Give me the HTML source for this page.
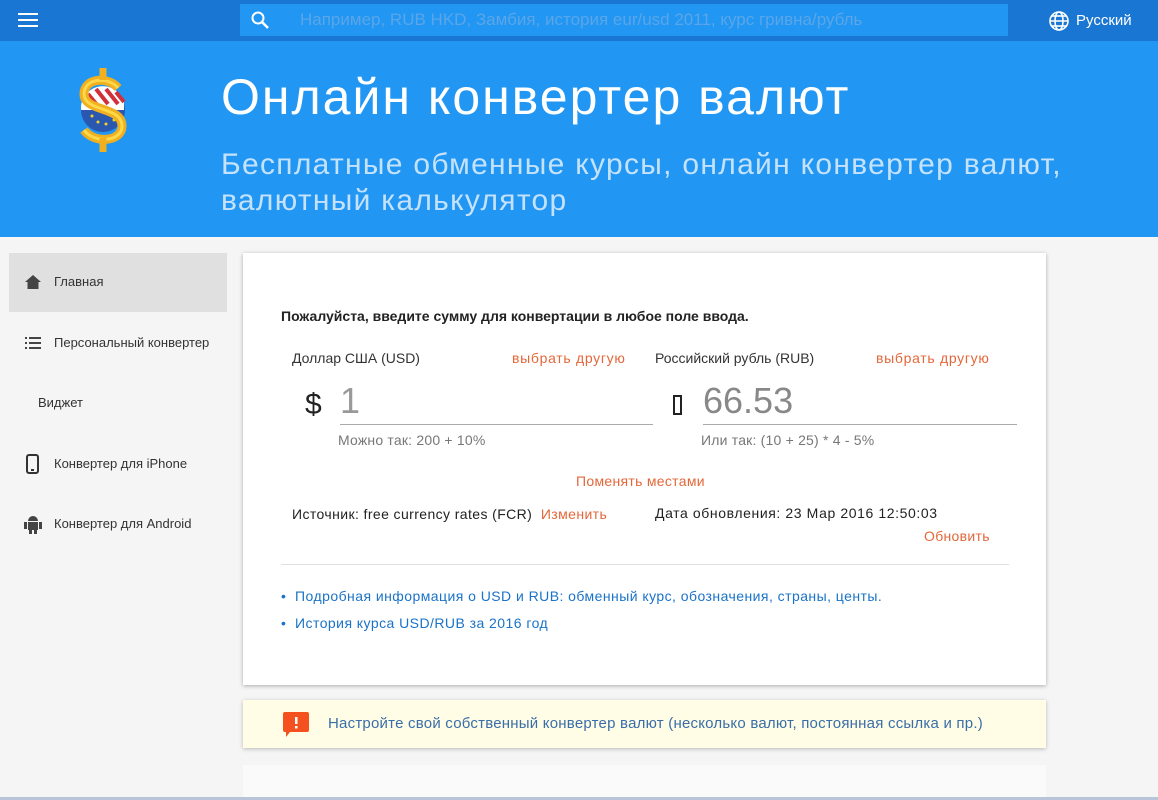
<!DOCTYPE html>
<html><head><meta charset="utf-8"><style>
*{margin:0;padding:0;box-sizing:border-box}
body{width:1158px;height:800px;overflow:hidden;background:#f5f5f5;font-family:"Liberation Sans",sans-serif;position:relative;color:#212121}
.abs{position:absolute;white-space:nowrap}
.top{left:0;top:0;width:1158px;height:41px;background:#1976d2}
.hdr{left:0;top:41px;width:1158px;height:196px;background:#2196f3}
.search{left:240px;top:4px;width:768px;height:32px;background:#2196f3}
.ph{left:300px;top:10px;color:#5aa6e8;font-size:17px}
h1{position:absolute;left:221px;top:68px;font-weight:normal;color:#fff;font-size:50px;letter-spacing:2px;white-space:nowrap}
.sub{left:221px;top:147px;color:#c4e2fb;font-size:30px;line-height:36px;width:900px;letter-spacing:1.3px;white-space:normal}
.side{font-size:13px;color:#333}
.card{background:#fff;box-shadow:0 1px 4px rgba(0,0,0,.3)}
.or{color:#e4673a}
.blue{color:#1a73c8}
</style></head><body>
<div class="abs top"></div>
<div class="abs hdr"></div>
<svg class="abs" style="left:18px;top:13px" width="20" height="14"><rect y="0" width="20" height="2" fill="#fff"/><rect y="6" width="20" height="2" fill="#fff"/><rect y="12" width="20" height="2" fill="#fff"/></svg>
<div class="abs search"></div>
<svg class="abs" style="left:250px;top:10px" width="20" height="20"><circle cx="8" cy="8" r="5.5" stroke="#fff" stroke-width="2" fill="none"/><line x1="12" y1="12" x2="18" y2="18" stroke="#fff" stroke-width="2.5"/></svg>
<div class="abs ph">Например, RUB HKD, Замбия, история eur/usd 2011, курс гривна/рубль</div>
<svg class="abs" style="left:1048px;top:10px" width="22" height="22" viewBox="0 0 22 22"><g stroke="#fff" stroke-width="1.6" fill="none"><circle cx="11" cy="11" r="9"/><ellipse cx="11" cy="11" rx="4" ry="9"/><line x1="2" y1="11" x2="20" y2="11"/><line x1="4" y1="6" x2="18" y2="6"/><line x1="4" y1="16" x2="18" y2="16"/></g></svg>
<div class="abs" style="left:1076px;top:12px;color:#fff;font-size:15px">Русский</div>
<svg class="abs" style="left:66px;top:64px" width="74" height="90" viewBox="0 0 74 90">
<circle cx="37" cy="46" r="22" fill="#2a58b0"/>
<path d="M15 42 A22 22 0 0 1 58 38 L58 46 L15 46Z" fill="#fff"/>
<g stroke="#d0303a" stroke-width="4"><line x1="22" y1="30" x2="32" y2="42"/><line x1="30" y1="25" x2="42" y2="40"/><line x1="40" y1="25" x2="52" y2="40"/><line x1="50" y1="28" x2="58" y2="38"/></g>
<g fill="#f5d020"><circle cx="26" cy="52" r="1.5"/><circle cx="32" cy="58" r="1.5"/><circle cx="40" cy="60" r="1.5"/><circle cx="48" cy="56" r="1.5"/></g>
<path d="M52 24 C42 12 18 14 18 30 C18 48 56 42 56 62 C56 78 28 80 18 66" stroke="#f0b020" stroke-width="9" fill="none"/>
<path d="M52 24 C42 12 18 14 18 30 C18 48 56 42 56 62 C56 78 28 80 18 66" stroke="#ffd84a" stroke-width="3" fill="none"/>
<line x1="37" y1="4" x2="37" y2="16" stroke="#f0b020" stroke-width="7"/><line x1="37" y1="74" x2="37" y2="88" stroke="#f0b020" stroke-width="7"/>
</svg>
<h1>Онлайн конвертер валют</h1>
<div class="abs sub">Бесплатные обменные курсы, онлайн конвертер валют, валютный калькулятор</div>
<div class="abs" style="left:9px;top:253px;width:218px;height:59px;background:#e0e0e0"></div>
<svg class="abs" style="left:25px;top:275px" width="16" height="14"><path d="M8 0 L16 7 L13.5 7 L13.5 14 L2.5 14 L2.5 7 L0 7Z" fill="#444"/></svg>
<div class="abs side" style="left:54px;top:274px">Главная</div>
<svg class="abs" style="left:24px;top:336px" width="18" height="14"><g fill="#444"><rect x="5" y="1" width="12" height="2"/><rect x="5" y="6" width="12" height="2"/><rect x="5" y="11" width="12" height="2"/><rect x="1" y="1" width="2" height="2"/><rect x="1" y="6" width="2" height="2"/><rect x="1" y="11" width="2" height="2"/></g></svg>
<div class="abs side" style="left:54px;top:335px">Персональный конвертер</div>
<div class="abs side" style="left:38px;top:395px">Виджет</div>
<svg class="abs" style="left:26px;top:454px" width="13" height="20"><rect x="1" y="1" width="11" height="18" rx="2" stroke="#333" stroke-width="2" fill="none"/><rect x="5" y="15" width="3" height="2" fill="#333"/></svg>
<div class="abs side" style="left:54px;top:456px">Конвертер для iPhone</div>
<svg class="abs" style="left:24px;top:514px" width="18" height="20"><g fill="#444"><path d="M4 7 A5 5 0 0 1 14 7Z"/><rect x="4" y="8" width="10" height="8"/><rect x="0" y="8" width="3" height="7"/><rect x="15" y="8" width="3" height="7"/><rect x="5" y="15" width="3" height="5"/><rect x="10" y="15" width="3" height="5"/></g></svg>
<div class="abs side" style="left:54px;top:516px">Конвертер для Android</div>

<div class="abs card" style="left:243px;top:253px;width:803px;height:432px"></div>
<div class="abs" style="left:281px;top:308px;font-size:14px;font-weight:bold;color:#222">Пожалуйста, введите сумму для конвертации в любое поле ввода.</div>
<div class="abs" style="left:292px;top:350px;font-size:14px;color:#333">Доллар США (USD)</div>
<div class="abs or" style="left:512px;top:350px;font-size:14px;letter-spacing:.7px">выбрать другую</div>
<div class="abs" style="left:655px;top:350px;font-size:14px;color:#333">Российский рубль (RUB)</div>
<div class="abs or" style="left:876px;top:350px;font-size:14px;letter-spacing:.7px">выбрать другую</div>
<div class="abs" style="left:305px;top:388px;font-size:30px;color:#222">$</div>
<div class="abs" style="left:340px;top:380px;font-size:36px;color:#999;font-weight:300">1</div>
<div class="abs" style="left:340px;top:424px;width:313px;height:1px;background:#aaa"></div>
<div class="abs" style="left:338px;top:432px;font-size:14px;color:#777;letter-spacing:.2px">Можно так: 200 + 10%</div>
<div class="abs" style="left:673px;top:395px;width:9px;height:20px;border:2px solid #222"></div>
<div class="abs" style="left:703px;top:380px;font-size:36px;color:#888">66.53</div>
<div class="abs" style="left:703px;top:424px;width:314px;height:1px;background:#aaa"></div>
<div class="abs" style="left:701px;top:432px;font-size:14px;color:#777;letter-spacing:.2px">Или так: (10 + 25) * 4 - 5%</div>
<div class="abs or" style="left:576px;top:473px;font-size:14px;letter-spacing:.3px">Поменять местами</div>
<div class="abs" style="left:292px;top:506px;font-size:14px;color:#222;letter-spacing:.4px">Источник: free currency rates (FCR) <span class="or">&nbsp;Изменить</span></div>
<div class="abs" style="left:655px;top:505px;font-size:14px;color:#222;letter-spacing:.6px">Дата обновления: 23 Мар 2016 12:50:03</div>
<div class="abs or" style="left:924px;top:528px;font-size:14px;letter-spacing:.3px">Обновить</div>
<div class="abs" style="left:281px;top:564px;width:728px;height:1px;background:#e0e0e0"></div>
<div class="abs blue" style="left:281px;top:588px;font-size:14px;letter-spacing:.45px">• &nbsp;Подробная информация о USD и RUB: обменный курс, обозначения, страны, центы.</div>
<div class="abs blue" style="left:281px;top:615px;font-size:14px;letter-spacing:.45px">• &nbsp;История курса USD/RUB за 2016 год</div>

<div class="abs" style="left:243px;top:700px;width:803px;height:48px;background:#fffde6;box-shadow:0 1px 4px rgba(0,0,0,.25)"></div>
<svg class="abs" style="left:283px;top:712px" width="26" height="26"><path d="M2 0 H24 A2 2 0 0 1 26 2 V18 A2 2 0 0 1 24 20 H7 L3 25 L3 20 H2 A2 2 0 0 1 0 18 V2 A2 2 0 0 1 2 0Z" fill="#f4511e"/><rect x="12" y="5" width="2.5" height="7" fill="#fff"/><rect x="12" y="14" width="2.5" height="2.5" fill="#fff"/></svg>
<div class="abs" style="left:328px;top:715px;font-size:15px;color:#3a6ea8;letter-spacing:.22px">Настройте свой собственный конвертер валют (несколько валют, постоянная ссылка и пр.)</div>
<div class="abs" style="left:243px;top:765px;width:803px;height:35px;background:#fafafa"></div>
<div class="abs" style="left:0;top:797px;width:1158px;height:3px;background:#b8c4d8"></div>
</body></html>
